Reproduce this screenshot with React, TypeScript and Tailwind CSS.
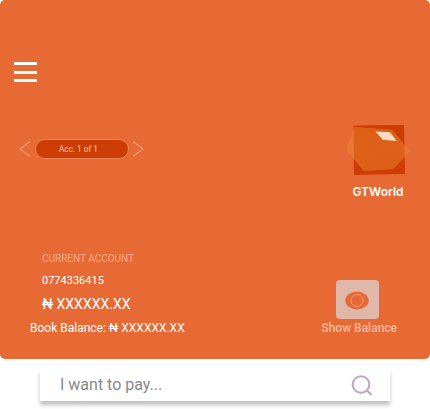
function Logo() {
  return (
    <svg width="66" height="52" viewBox="345 124 66 52" className="block" aria-hidden="true">
      <path d="M353.5 125.5L404 125L405 174L354 175Z" fill="#cc3e05" />
      <path d="M354.5 127L392 130L410 151L393 169L364 171L346 150Z" fill="#ee8038" fillOpacity="0.6" />
      <path d="M354.5 127L392 130L404.3 144V158L393 169L364 171L354 159Z" fill="#dd5f17" fillOpacity="0.85" />
      <path d="M354.5 127L377 151L392 130Z" fill="#dc5f16" fillOpacity="0.3" />
      <path d="M377 151L364 171L393 169L404.3 158V151Z" fill="#d95c17" fillOpacity="0.3" />
      <path d="M375.5 131.5L390 132.3L396.8 141L382.8 139.7Z" fill="#fcdcc2" />
    </svg>
  );
}

function Chevron({ flip = false }: { flip?: boolean }) {
  return (
    <svg width="12" height="18" viewBox="0 0 12 18" fill="none" stroke="#f29a75" strokeWidth="1.1" className={flip ? "-scale-x-100" : ""} aria-hidden="true">
      <path d="M11 1.5L1 9L11 16.5" />
    </svg>
  );
}

export default function App() {
  return (
    <div className="h-[409px] w-[430px] overflow-hidden bg-white font-['Roboto',sans-serif]">
      <section className="h-[359px] rounded-[5px] bg-[#e76a35] pt-[62px] text-white">
        <button className="ml-[14px] flex h-5 w-[23px] flex-col" aria-label="Menu">
          <span className="h-[3px] w-full bg-white" />
          <span className="mt-[6px] h-[3px] w-full bg-white" />
          <span className="mt-[5px] h-[3px] w-full bg-white" />
        </button>
        <div className="mt-[42px] flex h-[76px] justify-between pl-[19px] pr-[19px]">
          <div className="mt-[15px] flex h-5 items-center">
            <Chevron />
            <div className="ml-1 mr-[3px] flex h-5 w-[94px] items-center rounded-full border border-[#e98454] bg-[#cc3e05] pl-[23px] text-[8.2px] text-[#f8c4ad]">
              <span className="whitespace-nowrap leading-[18px]">Acc. 1 of 1</span>
            </div>
            <Chevron flip />
          </div>
          <div className="flex flex-col items-center">
            <Logo />
            <span className="mt-[8px] font-['Inter',sans-serif] text-[12px] font-semibold leading-4">GTWorld</span>
          </div>
        </div>
        <div className="mt-[50px] flex justify-between pl-[30px] pr-[33px]">
          <div className="flex flex-col whitespace-nowrap">
            <span className="ml-3 h-[22px] text-[10px] leading-[18px] text-[#f6ab8b]">CURRENT ACCOUNT</span>
            <span className="ml-3 h-[22px] text-[11px] leading-[18px]">0774336415</span>
            <span className="ml-3 h-[25px] text-[14px] leading-[20px]">₦ XXXXXX.XX</span>
            <span className="text-[12px] leading-[18px]">Book Balance: ₦ XXXXXX.XX</span>
          </div>
          <button className="mt-[30px] flex flex-col items-center">
            <span className="mr-[4px] flex h-[39px] w-[43px] items-center justify-center rounded-[4px] bg-[#dfb8aa]">
              <svg width="24" height="20" viewBox="0 0 24 20" fill="none" aria-hidden="true">
                <ellipse cx="12" cy="10.5" rx="11.7" ry="9" fill="#e76a35" />
                <circle cx="12" cy="10.5" r="6" stroke="#e6a083" strokeWidth="0.9" />
              </svg>
            </span>
            <span className="whitespace-nowrap text-[12px] font-medium leading-[18px] text-[#f7b99f]">Show Balance</span>
          </button>
        </div>
      </section>
      <div className="ml-10 mt-[10px] flex h-8 w-[350px] items-center justify-between bg-white pl-5 pr-[17px] shadow-[0_4px_4px_rgba(0,0,0,0.25)]">
        <span className="text-[16px] leading-[22px] text-[#888]">I want to pay...</span>
        <svg width="23" height="23" viewBox="0 0 23 23" fill="none" stroke="#c2a5c0" strokeWidth="2.1" aria-hidden="true">
          <circle cx="11" cy="10.5" r="8.3" />
          <path d="M17 16.5L21.5 21" />
        </svg>
      </div>
    </div>
  );
}
